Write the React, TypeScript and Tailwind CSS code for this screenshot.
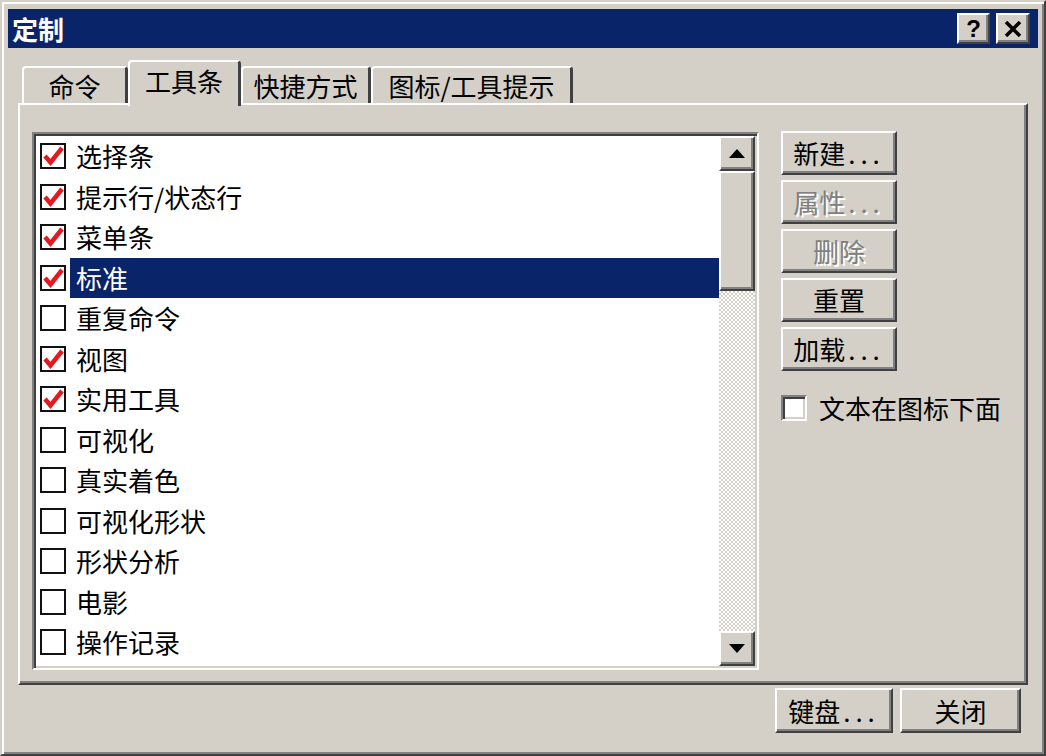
import React from 'react';

const raised =
  'border-2 border-t-white border-l-white border-r-[#404040] border-b-[#404040] shadow-[inset_-2px_-2px_0_#808080]';
const sunken =
  'border-2 border-t-[#808080] border-l-[#808080] border-r-white border-b-white shadow-[inset_2px_2px_0_#404040,inset_-2px_-2px_0_#d4d0c8]';

const items = [
  { label: '选择条', checked: true },
  { label: '提示行/状态行', checked: true },
  { label: '菜单条', checked: true },
  { label: '标准', checked: true, selected: true },
  { label: '重复命令', checked: false },
  { label: '视图', checked: true },
  { label: '实用工具', checked: true },
  { label: '可视化', checked: false },
  { label: '真实着色', checked: false },
  { label: '可视化形状', checked: false },
  { label: '形状分析', checked: false },
  { label: '电影', checked: false },
  { label: '操作记录', checked: false },
];

function Check() {
  return (
    <svg width="22" height="22" viewBox="0 0 22 22">
      <path d="M3 11 L8.5 17.5 L20 3" fill="none" stroke="#e5171f" strokeWidth="4.5" strokeLinejoin="miter" />
    </svg>
  );
}

function Dots() {
  return <span className="tracking-[5px] ml-[3px]">...</span>;
}

function SideButton({ children, disabled }: { children: React.ReactNode; disabled?: boolean }) {
  return (
    <div
      className={`${raised} bg-[#d4d0c8] w-[116px] h-[44px] flex items-center justify-center text-[26px] leading-none ${
        disabled ? 'text-[#808080] [text-shadow:2px_2px_0_white]' : 'text-black'
      }`}
    >
      {children}
    </div>
  );
}

function Tab({ label, w, selected }: { label: string; w: string; selected?: boolean }) {
  return (
    <div
      className={`${w} ${
        selected ? 'h-[46px] -mb-[3px] relative z-10 pb-[6px]' : 'h-[37px]'
      } bg-[#d4d0c8] border-t-2 border-l-2 border-r-[3px] border-t-white border-l-white border-r-[#404040] rounded-tl-[4px] rounded-tr-[4px] flex items-center justify-center text-[26px] leading-none text-black`}
    >
      {label}
    </div>
  );
}

export default function App() {
  return (
    <div className="w-[1046px] h-[756px] bg-[#d4d0c8] border-2 border-t-[#d4d0c8] border-l-[#d4d0c8] border-r-[#404040] border-b-[#404040] shadow-[inset_2px_2px_0_white,inset_-2px_-2px_0_#808080] pt-[7px] pl-[6px] pr-[6px] font-['Noto_Sans_CJK_SC',sans-serif] select-none overflow-hidden">
      <div className="h-[39px] bg-[#0a246a] flex items-center justify-between pl-[4px] pr-[8px]">
        <span className="text-white font-bold text-[26px] leading-none">定制</span>
        <div className="flex gap-[6px]">
          <div className={`${raised} bg-[#d4d0c8] w-[33px] h-[31px] flex items-center justify-center text-[24px] font-bold leading-none font-['Liberation_Sans',sans-serif]`}>
            ?
          </div>
          <div className={`${raised} bg-[#d4d0c8] w-[34px] h-[31px] flex items-center justify-center`}>
            <svg width="18" height="16" viewBox="0 0 18 16">
              <path d="M2 1 L16 15 M16 1 L2 15" stroke="black" strokeWidth="3.5" />
            </svg>
          </div>
        </div>
      </div>

      <div className="px-[10px]">
        <div className="mt-[12px] h-[43px] flex items-end pl-[4px]">
          <Tab label="命令" w="w-[106px]" />
          <Tab label="工具条" w="w-[113px]" selected />
          <Tab label="快捷方式" w="w-[130px]" />
          <Tab label="图标/工具提示" w="w-[202px]" />
        </div>

        <div className={`${raised} h-[582px] pl-[12px] pt-[27px] flex`}>
          <div className={`${sunken} w-[727px] h-[538px] p-[2px] flex bg-white`}>
            <div className="flex-1 flex flex-col">
              {items.map((it) => (
                <div key={it.label} className="h-[40.5px] flex items-center pl-[4px] shrink-0">
                  <div className="w-[26px] h-[26px] border-2 border-[#111] bg-white flex items-center justify-center shrink-0">
                    {it.checked && <Check />}
                  </div>
                  <div
                    className={`ml-[4px] flex-1 h-[40px] flex items-center px-[6px] text-[26px] leading-none ${
                      it.selected ? 'bg-[#0a246a] text-white' : 'text-black'
                    }`}
                  >
                    {it.label}
                  </div>
                </div>
              ))}
            </div>
            <div className="w-[36px] flex flex-col">
              <div className={`${raised} bg-[#d4d0c8] h-[35px] flex items-center justify-center`}>
                <svg width="16" height="9" viewBox="0 0 16 9">
                  <path d="M8 0 L16 9 L0 9 Z" fill="black" />
                </svg>
              </div>
              <div className={`${raised} bg-[#d4d0c8] h-[120px]`} />
              <div className="flex-1 bg-[repeating-conic-gradient(#d4d0c8_0_25%,#ffffff_0_50%)] bg-[length:4px_4px]" />
              <div className={`${raised} bg-[#d4d0c8] h-[35px] flex items-center justify-center`}>
                <svg width="16" height="9" viewBox="0 0 16 9">
                  <path d="M0 0 L16 0 L8 9 Z" fill="black" />
                </svg>
              </div>
            </div>
          </div>

          <div className="ml-[22px] flex flex-col">
            <div className="flex flex-col gap-[5px] -mt-[1px]">
              <SideButton>
                新建<Dots />
              </SideButton>
              <SideButton disabled>
                属性<Dots />
              </SideButton>
              <SideButton disabled>删除</SideButton>
              <SideButton>重置</SideButton>
              <SideButton>
                加载<Dots />
              </SideButton>
            </div>
            <div className="mt-[24px] flex items-center">
              <div className={`${sunken} w-[26px] h-[26px] bg-white`} />
              <span className="ml-[12px] text-[26px] leading-none text-black">文本在图标下面</span>
            </div>
          </div>
        </div>

        <div className="mt-[3px] flex justify-end gap-[7px] pr-[7px]">
          <div className={`${raised} bg-[#d4d0c8] w-[118px] h-[45px] flex items-center justify-center text-[26px] leading-none`}>
            键盘<Dots />
          </div>
          <div className={`${raised} bg-[#d4d0c8] w-[121px] h-[45px] flex items-center justify-center text-[26px] leading-none`}>
            关闭
          </div>
        </div>
      </div>
    </div>
  );
}
